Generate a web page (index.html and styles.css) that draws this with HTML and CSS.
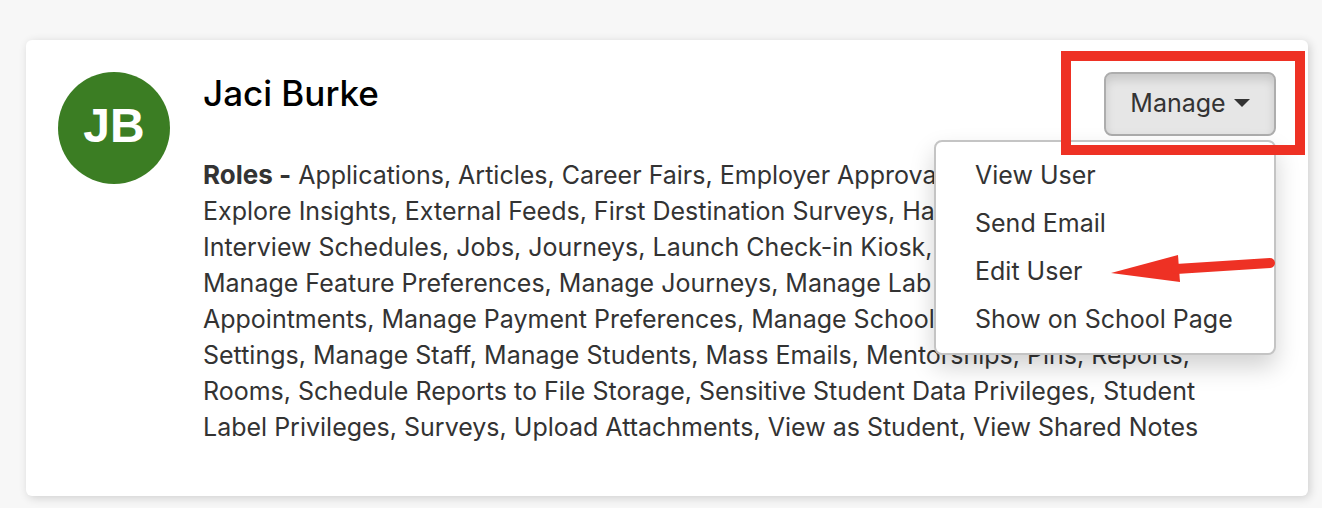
FILE: index.html
```html
<!DOCTYPE html>
<html lang="en">
<head>
    <meta charset="UTF-8">
    <meta name="viewport" content="width=device-width, initial-scale=1.0">
    <title>Jaci Burke</title>
    <link rel="stylesheet" href="styles.css">
</head>

<body>
    <div class="card">
        <div class="avatar">JB</div>

        <div class="info">
            <div class="top">
                <h2>Jaci Burke</h2>

                <div class="manage">
                    <button type="button" class="btn" aria-haspopup="true" aria-expanded="true">Manage <span class="caret"></span></button>
                    <ul class="menu">
                        <li><a href="#view">View User</a></li>
                        <li><a href="#email">Send Email</a></li>
                        <li><a href="#edit">Edit User</a></li>
                        <li><a href="#school">Show on School Page</a></li>
                    </ul>
                    <div class="highlight"></div>
                    <svg class="arrow" width="166" height="30" viewBox="0 0 166 30">
                        <path d="M1 19 L68 1 L70 28 Z" fill="#ee3124"/>
                        <path d="M66 15 L160 9" stroke="#ee3124" stroke-width="10" stroke-linecap="round"/>
                    </svg>
                </div>
            </div>

            <p class="roles">
                <b>Roles -</b> Applications, Articles, Career Fairs, Employer Approva<br>
                Explore Insights, External Feeds, First Destination Surveys, Ha<br>
                Interview Schedules, Jobs, Journeys, Launch Check-in Kiosk,<br>
                Manage Feature Preferences, Manage Journeys, Manage Lab<br>
                Appointments, Manage Payment Preferences, Manage School<br>
                Settings, Manage Staff, Manage Students, Mass Emails, Mentorships, Pins, Reports,<br>
                Rooms, Schedule Reports to File Storage, Sensitive Student Data Privileges, Student<br>
                Label Privileges, Surveys, Upload Attachments, View as Student, View Shared Notes
            </p>
        </div>
    </div>
</body>
</html>
```
FILE: styles.css
```css
*{
    box-sizing: border-box;
}

body{
    margin: 0;
    padding: 40px 14px 12px 26px;
    background-color: #f7f7f7;
    color: #333;
    font-family: Inter, Arial, sans-serif;
    font-size: 25px;
}

.card{
    display: flex;
    gap: 33px;
    padding: 32px 32px 51px;
    background-color: white;
    border-radius: 6px;
    box-shadow: 2px 2px 10px rgba(0, 0, 0, 0.16);
}

.avatar{
    flex: none;
    width: 112px;
    height: 112px;
    border-radius: 50%;
    background-color: #3b7d23;
    color: white;
    font-family: "Liberation Sans", Arial, sans-serif;
    font-size: 48px;
    font-weight: 700;
    line-height: 108px;
    text-align: center;
}

.info{
    flex: 1;
    min-width: 0;
}

.top{
    display: flex;
    justify-content: space-between;
    align-items: flex-start;
}

h2{
    margin: 0;
    color: black;
    font-size: 35px;
    font-weight: 500;
    line-height: 42px;
}

.manage{
    position: relative;
}

.btn{
    display: flex;
    align-items: center;
    justify-content: center;
    gap: 8px;
    width: 172px;
    height: 64px;
    padding: 0 0 2px;
    border: 2px solid #adadad;
    border-radius: 8px;
    background-color: #e6e6e6;
    box-shadow: inset 0 6px 10px rgba(0, 0, 0, 0.125);
    color: #333;
    font-family: inherit;
    font-size: 25px;
}

.caret{
    border-top: 8px solid #333;
    border-left: 8px solid transparent;
    border-right: 8px solid transparent;
}

.menu{
    position: absolute;
    top: 68px;
    right: 0;
    width: 342px;
    margin: 0;
    padding: 9px 0 10px;
    list-style: none;
    background-color: white;
    border: 2px solid #c4c4c4;
    border-radius: 8px;
    box-shadow: 0 12px 24px rgba(0, 0, 0, 0.18);
}

.menu a{
    display: block;
    padding: 0 39px;
    color: #333;
    line-height: 48px;
    text-decoration: none;
    white-space: nowrap;
}

.menu a:hover{
    background-color: #f5f5f5;
}

.highlight{
    position: absolute;
    top: -21px;
    right: -29px;
    width: 244px;
    height: 104px;
    border: 10px solid #ee3124;
    pointer-events: none;
}

.arrow{
    position: absolute;
    top: 182px;
    right: 0;
    pointer-events: none;
}

.roles{
    margin: 21px 0 0;
    line-height: 36px;
    white-space: nowrap;
}

.roles b{
    font-size: 26px;
}
```
